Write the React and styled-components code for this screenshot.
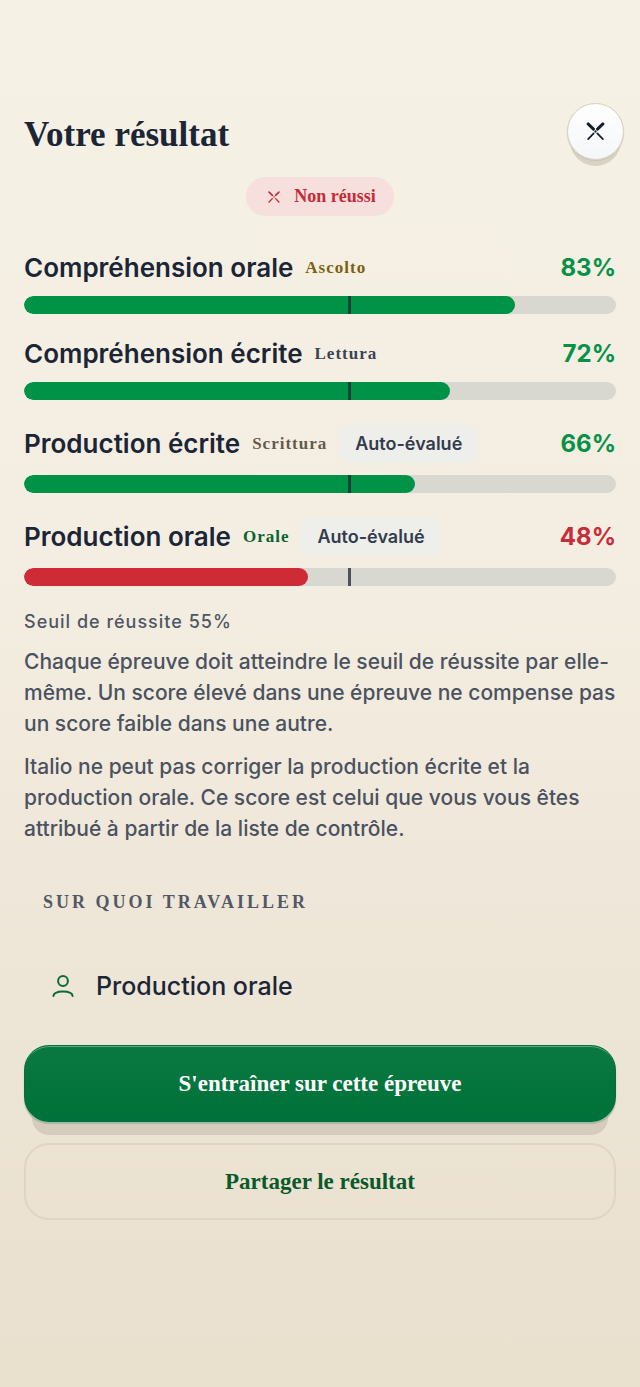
import React from 'react'
import styled, { createGlobalStyle } from 'styled-components'

const PASS_MARK = 55

const SECTIONS = [
  { id: 'ascolto', title: 'Compréhension orale', italian: 'Ascolto', tone: '#7c6110', score: 83 },
  { id: 'lettura', title: 'Compréhension écrite', italian: 'Lettura', tone: '#3b4353', score: 72 },
  { id: 'scrittura', title: 'Production écrite', italian: 'Scrittura', tone: '#655a4a', score: 66, selfRated: true },
  { id: 'orale', title: 'Production orale', italian: 'Orale', tone: '#0a6330', score: 48, selfRated: true },
]

const CrossIcon = ({ size }) => (
  <svg width={size} height={size} viewBox='0 0 18 18' aria-hidden='true'>
    <g stroke='currentColor' strokeLinecap='round' fill='none'>
      <path d='M2 1.8 7.100 6.700M16 1.800 10.900 6.700' strokeWidth='2.8' />
      <path d='M7.300 10.700 2 16.2M10.700 10.700 16 16.2' strokeWidth='1.6' />
    </g>
    <circle cx='9' cy='9' r='1.1' fill='currentColor' />
  </svg>
)

const ThinCrossIcon = ({ size }) => (
  <svg width={size} height={size} viewBox='0 0 18 18' aria-hidden='true'>
    <g stroke='currentColor' strokeLinecap='round' fill='none'>
      <path d='M1.6 1.6 6.600 6.600M16.4 1.6 11.400 6.600' strokeWidth='2.4' />
      <path d='M6.600 11.400 1.6 16.4M11.400 11.400 16.4 16.4' strokeWidth='2' />
    </g>
    <circle cx='9' cy='9' r='1.2' fill='currentColor' />
  </svg>
)

const PersonIcon = () => (
  <svg width='22' height='24' viewBox='0 0 22 24' aria-hidden='true'>
    <g stroke='currentColor' strokeWidth='2' strokeLinecap='round' fill='none'>
      <circle cx='11' cy='7' r='4.9' />
      <path d='M1.4 22c.3-3.100 4.200-4.600 9.600-4.600s9.300 1.500 9.600 4.600' />
    </g>
  </svg>
)

const Score = ({ section }) => {
  const passed = section.score >= PASS_MARK
  return (
    <ScoreItem>
      <ScoreHead>
        <ScoreTitle>{section.title}</ScoreTitle>
        <ItalianName $tone={section.tone}>{section.italian}</ItalianName>
        {section.selfRated && <Chip>Auto-évalué</Chip>}
        <Percent $passed={passed}>{section.score}%</Percent>
      </ScoreHead>
      <Track>
        <Fill $passed={passed} style={{ width: `${section.score}%` }} />
        <Threshold style={{ left: `${PASS_MARK}%` }} />
      </Track>
    </ScoreItem>
  )
}

const App = () => {
  return (
    <>
      <GlobalStyle />
      <Page>
        <Header>
          <Title>Votre résultat</Title>
          <CloseButton type='button' aria-label='Fermer'>
            <CrossIcon size={19} />
          </CloseButton>
        </Header>
        <Content>
          <Verdict>
            <ThinCrossIcon size={12} />
            Non réussi
          </Verdict>
          <ScoreList>
            {SECTIONS.map((section) => (
              <Score key={section.id} section={section} />
            ))}
          </ScoreList>
          <ThresholdNote>Seuil de réussite {PASS_MARK}%</ThresholdNote>
          <Paragraph>
            Chaque épreuve doit atteindre le seuil de réussite par elle-même. Un
            score élevé dans une épreuve ne compense pas un score faible dans une
            autre.
          </Paragraph>
          <Paragraph>
            Italio ne peut pas corriger la production écrite et la production
            orale. Ce score est celui que vous vous êtes attribué à partir de la
            liste de contrôle.
          </Paragraph>
          <WorkHeading>Sur quoi travailler</WorkHeading>
          <WorkList>
            <WorkItem>
              <PersonIcon />
              Production orale
            </WorkItem>
          </WorkList>
          <Actions>
            <PrimaryButton type='button'>S'entraîner sur cette épreuve</PrimaryButton>
            <SecondaryButton type='button'>Partager le résultat</SecondaryButton>
          </Actions>
        </Content>
      </Page>
    </>
  )
}

export default App

const GlobalStyle = createGlobalStyle`
  * {
    box-sizing: border-box;
  }
  body {
    margin: 0;
    background: #e9e0ce;
  }
  h1, h2, p, ul {
    margin: 0;
    padding: 0;
  }
  ul {
    list-style: none;
  }
`
const Page = styled.main`
  min-height: 100vh;
  padding: 103px 0 48px;
  background: linear-gradient(180deg, #f5f1e4 0%, #f4eee2 40%, #ede5d6 72%, #e9e0ce 100%);
  font-family: Inter, 'Liberation Sans', sans-serif;
  color: #1b2536;
`
const Header = styled.header`
  display: flex;
  justify-content: space-between;
  align-items: center;
  padding: 0 16px 0 24px;
`
const Title = styled.h1`
  padding-top: 6px;
  font-family: 'Liberation Serif', serif;
  font-size: 35px;
  font-weight: 700;
  line-height: 44px;
`
const CloseButton = styled.button`
  display: flex;
  align-items: center;
  justify-content: center;
  width: 57px;
  height: 57px;
  padding: 0;
  border: 1px solid #d5cfc0;
  border-radius: 50%;
  background: linear-gradient(180deg, #ffffff, #f4f6f8);
  box-shadow: 0 1px 1px #c9c3b6, 0 9px 0 -3px #d8d2c5;
  color: #141c2b;
  cursor: pointer;
`
const Content = styled.div`
  display: flex;
  flex-direction: column;
  padding: 17px 24px 0;
`
const Verdict = styled.p`
  display: flex;
  align-items: center;
  align-self: center;
  gap: 14px;
  height: 39px;
  padding: 0 18px 0 22px;
  border-radius: 20px;
  background: #f6dfdd;
  color: #c52b37;
  font-family: 'Liberation Serif', serif;
  font-size: 18px;
  font-weight: 700;
`
const ScoreList = styled.ul`
  display: flex;
  flex-direction: column;
  gap: 24px;
  margin-top: 36px;
`
const ScoreItem = styled.li`
  display: flex;
  flex-direction: column;
  gap: 12px;
`
const ScoreHead = styled.div`
  display: flex;
  align-items: center;
  gap: 12px;
`
const ScoreTitle = styled.h2`
  font-size: 26px;
  font-weight: 600;
  line-height: 32px;
`
const ItalianName = styled.span`
  color: ${(props) => props.$tone};
  font-family: 'Liberation Serif', serif;
  font-size: 17px;
  font-weight: 700;
  letter-spacing: 1px;
`
const Chip = styled.span`
  height: 39px;
  padding: 0 16px;
  border-radius: 12px;
  background: #eeeeeb;
  color: #333c4b;
  font-size: 18px;
  font-weight: 600;
  line-height: 39px;
`
const Percent = styled.span`
  margin-left: auto;
  color: ${(props) => (props.$passed ? '#079147' : '#c82c39')};
  font-size: 24px;
  font-weight: 700;
  line-height: 32px;
`
const Track = styled.div`
  position: relative;
  height: 18px;
  border-radius: 9px;
  background: #d9d8d0;
  overflow: hidden;
`
const Fill = styled.div`
  height: 100%;
  border-radius: 9px;
  background: ${(props) => (props.$passed ? '#009246' : '#ce2b37')};
`
const Threshold = styled.span`
  position: absolute;
  top: 0;
  bottom: 0;
  width: 3px;
  margin-left: -2px;
  background: rgba(27, 37, 54, 0.75);
`
const ThresholdNote = styled.p`
  margin-top: 24px;
  color: #4f5663;
  font-size: 18px;
  font-weight: 500;
  line-height: 24px;
  letter-spacing: 1px;
`
const Paragraph = styled.p`
  margin-top: 12px;
  color: #4b5260;
  font-size: 21px;
  font-weight: 500;
  line-height: 31px;
`
const WorkHeading = styled.h2`
  margin-top: 46px;
  padding: 0 19px;
  color: #535866;
  font-family: 'Liberation Serif', serif;
  font-size: 18px;
  font-weight: 700;
  line-height: 24px;
  letter-spacing: 3px;
  text-transform: uppercase;
`
const WorkList = styled.ul`
  margin-top: 40px;
`
const WorkItem = styled.li`
  display: flex;
  align-items: center;
  gap: 22px;
  padding: 0 28px;
  font-size: 25px;
  font-weight: 500;
  line-height: 64px;

  svg {
    color: #0b6b35;
  }
`
const Actions = styled.div`
  display: flex;
  flex-direction: column;
  gap: 21px;
  margin-top: 27px;
`
const ActionButton = styled.button`
  width: 100%;
  height: 77px;
  border-radius: 25px;
  font-family: 'Liberation Serif', serif;
  font-size: 23px;
  font-weight: 700;
  cursor: pointer;
`
const PrimaryButton = styled(ActionButton)`
  border: 1px solid #00713a;
  background: linear-gradient(180deg, #0a7841, #00713a);
  box-shadow: inset 0 2px 0 -1px rgba(255, 255, 255, 0.35), 0 2px 1px #a3b7a2, 0 21px 0 -8px #d6ccbe;
  color: #ffffff;
`
const SecondaryButton = styled(ActionButton)`
  border: 2px solid #ded5c4;
  background: transparent;
  color: #0a592b;
`
